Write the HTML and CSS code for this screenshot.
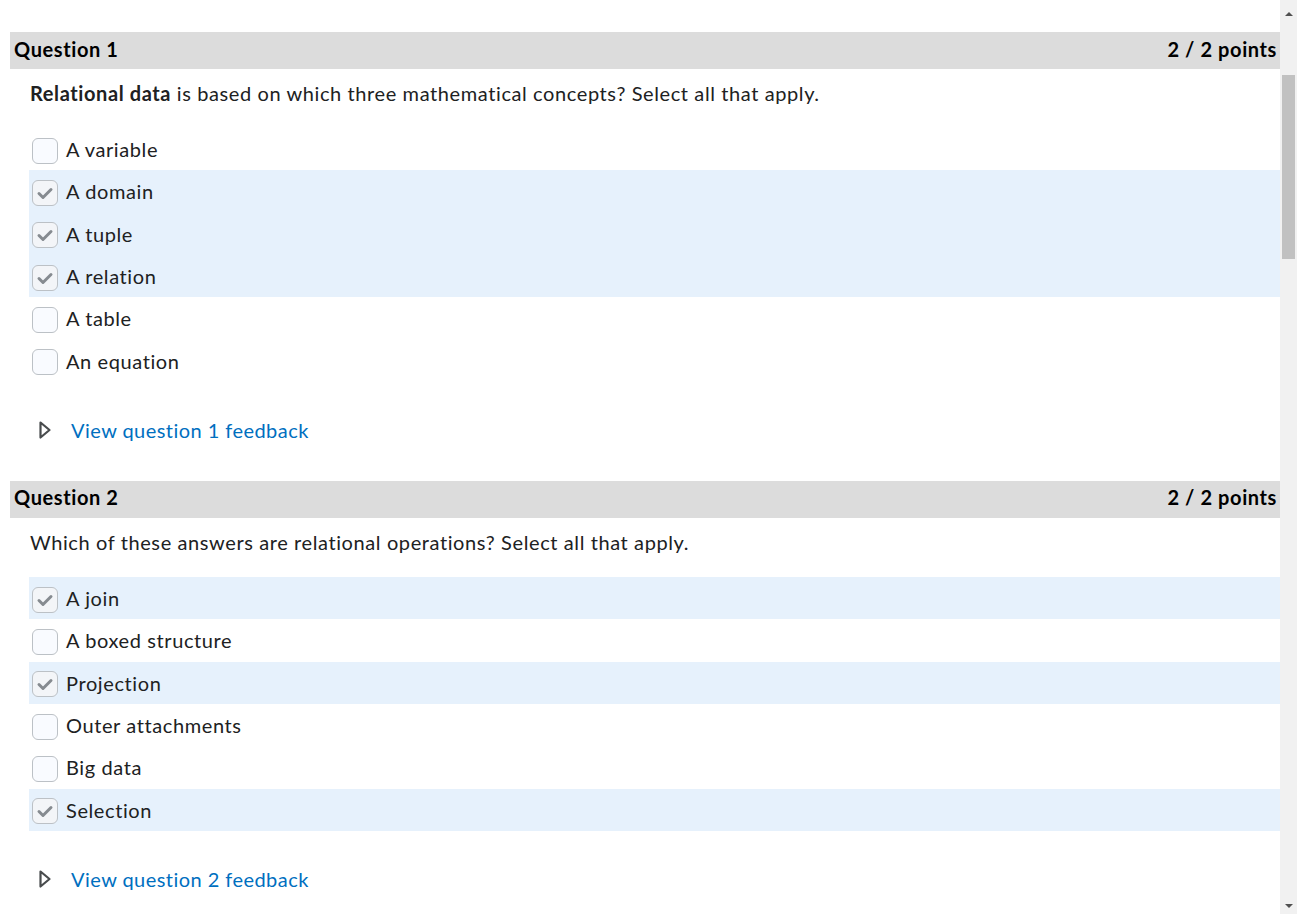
FILE: index.html
```html
<!DOCTYPE html>
<html lang="en">
<head>
<meta charset="utf-8">
<title>Quiz</title>
<link rel="stylesheet" href="styles.css">
</head>
<body>
<div class="page">
  <main class="content">
    <section class="question">
      <div class="q-head"><span>Question 1</span><span>2 / 2 points</span></div>
      <div class="q-body">
        <p class="q-text"><strong>Relational data</strong> is based on which three mathematical concepts? Select all that apply.</p>
        <ul class="options">
          <li class="opt"><span class="box"></span><span>A variable</span></li>
          <li class="opt on"><span class="box"><svg viewBox="0 0 24 24"><path d="M6 12.5l4 4 8-8"/></svg></span><span>A domain</span></li>
          <li class="opt on"><span class="box"><svg viewBox="0 0 24 24"><path d="M6 12.5l4 4 8-8"/></svg></span><span>A tuple</span></li>
          <li class="opt on"><span class="box"><svg viewBox="0 0 24 24"><path d="M6 12.5l4 4 8-8"/></svg></span><span>A relation</span></li>
          <li class="opt"><span class="box"></span><span>A table</span></li>
          <li class="opt"><span class="box"></span><span>An equation</span></li>
        </ul>
        <div class="feedback"><svg class="tri" viewBox="0 0 12 18"><path d="M1.5 1.5L10.5 9 1.5 16.5z"/></svg><a href="#">View question 1 feedback</a></div>
      </div>
    </section>
    <section class="question">
      <div class="q-head"><span>Question 2</span><span>2 / 2 points</span></div>
      <div class="q-body">
        <p class="q-text">Which of these answers are relational operations? Select all that apply.</p>
        <ul class="options">
          <li class="opt on"><span class="box"><svg viewBox="0 0 24 24"><path d="M6 12.5l4 4 8-8"/></svg></span><span>A join</span></li>
          <li class="opt"><span class="box"></span><span>A boxed structure</span></li>
          <li class="opt on"><span class="box"><svg viewBox="0 0 24 24"><path d="M6 12.5l4 4 8-8"/></svg></span><span>Projection</span></li>
          <li class="opt"><span class="box"></span><span>Outer attachments</span></li>
          <li class="opt"><span class="box"></span><span>Big data</span></li>
          <li class="opt on"><span class="box"><svg viewBox="0 0 24 24"><path d="M6 12.5l4 4 8-8"/></svg></span><span>Selection</span></li>
        </ul>
        <div class="feedback"><svg class="tri" viewBox="0 0 12 18"><path d="M1.5 1.5L10.5 9 1.5 16.5z"/></svg><a href="#">View question 2 feedback</a></div>
      </div>
    </section>
  </main>
  <div class="scrollbar">
    <div class="arrow up"></div>
    <div class="track"><div class="thumb"></div></div>
    <div class="arrow down"></div>
  </div>
</div>
</body>
</html>
```
FILE: styles.css
```css
* { box-sizing: border-box; }
html, body { margin: 0; padding: 0; }
body {
  font-family: Lato, "Open Sans", sans-serif;
  color: #202122;
  background: #fff;
  overflow: hidden;
  letter-spacing: 0.6px;
}
.page {
  display: flex;
  height: 914px;
  width: 1304px;
}
.content {
  width: 1280px;
  padding: 32px 0 0 10px;
  overflow: hidden;
}
.q-head {
  height: 37px;
  background: #dcdcdc;
  display: flex;
  justify-content: space-between;
  align-items: center;
  padding: 0 3px 4px 4px;
  font-size: 20px;
  font-weight: 700;
  color: #000;
}
.q-body {
  padding: 0 0 37px 19px;
}
.q-text {
  margin: 10px 0 21px 1px;
  font-size: 20px;
  line-height: 28px;
}
.q-text strong { font-weight: 700; }
.options {
  list-style: none;
  margin: 0;
  padding: 0;
}
.opt {
  height: 42.33px;
  display: flex;
  align-items: center;
  padding-left: 3px;
  font-size: 20px;
  gap: 8px;
}
.opt.on { background: #e6f1fc; }
.box {
  width: 26px;
  height: 26px;
  border: 1px solid #bcc1c6;
  border-radius: 6px;
  background: #f9fbff;
  display: flex;
  align-items: center;
  justify-content: center;
  margin-top: 3px;
}
.opt.on .box { background: #f3f5f8; }
.box svg {
  width: 24px;
  height: 24px;
  fill: none;
  stroke: #868b90;
  stroke-width: 3;
  stroke-linecap: round;
  stroke-linejoin: round;
}
.feedback {
  margin-top: 34px;
  height: 28px;
  display: flex;
  align-items: center;
  padding-left: 10px;
  font-size: 20px;
  letter-spacing: 0.45px;
}
.tri {
  width: 12px;
  height: 18px;
  fill: none;
  stroke: #494c4e;
  stroke-width: 2.2;
  stroke-linejoin: round;
  margin-right: 20px;
  margin-top: 1px;
}
.feedback a {
  color: #006fbf;
  text-decoration: none;
}
.scrollbar {
  width: 17px;
  background: #f1f1f1;
  display: flex;
  flex-direction: column;
  height: 914px;
}
.arrow {
  height: 17px;
  display: flex;
  align-items: center;
  justify-content: center;
}
.arrow::before {
  content: "";
  width: 0;
  height: 0;
  border-left: 4px solid transparent;
  border-right: 4px solid transparent;
}
.arrow.up::before { border-bottom: 4px solid #505050; margin-top: 10px; }
.arrow.down::before { border-top: 4px solid #505050; margin-top: 0; }
.track {
  flex: 1;
  padding: 58px 2px 0 2px;
}
.thumb {
  height: 184px;
  background: #c1c1c1;
}
```
